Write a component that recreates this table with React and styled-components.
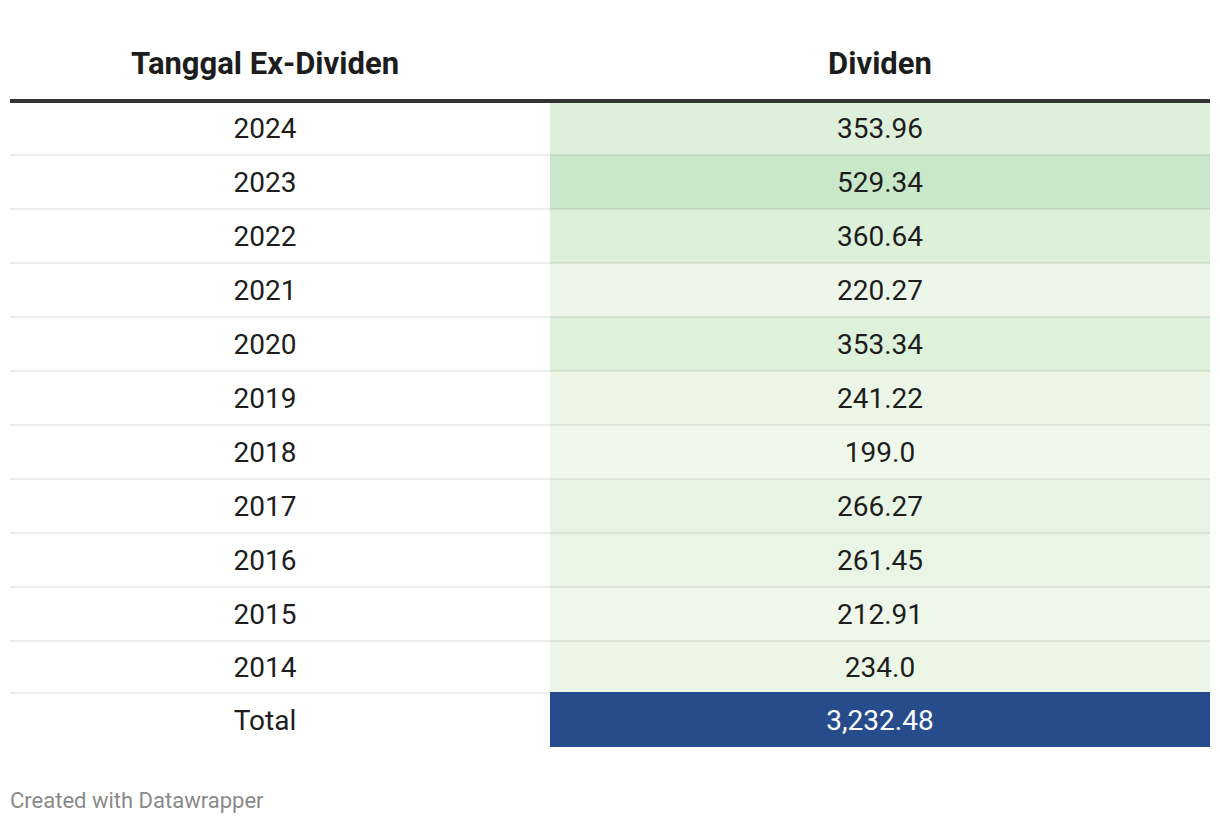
import React from "react";
import styled, { createGlobalStyle } from "styled-components";

const rows = [
  { year: "2024", value: 353.96, label: "353.96" },
  { year: "2023", value: 529.34, label: "529.34" },
  { year: "2022", value: 360.64, label: "360.64" },
  { year: "2021", value: 220.27, label: "220.27" },
  { year: "2020", value: 353.34, label: "353.34" },
  { year: "2019", value: 241.22, label: "241.22" },
  { year: "2018", value: 199.0, label: "199.0" },
  { year: "2017", value: 266.27, label: "266.27" },
  { year: "2016", value: 261.45, label: "261.45" },
  { year: "2015", value: 212.91, label: "212.91" },
  { year: "2014", value: 234.0, label: "234.0" },
];

const MIN = 199;
const MAX = 529.34;
const LOW = [240, 248, 235];
const HIGH = [201, 232, 201];

// heatmap colour for a value, between the lightest and darkest green
const shade = (v) => {
  const t = (v - MIN) / (MAX - MIN);
  const c = LOW.map((l, i) => Math.round(l + (HIGH[i] - l) * t));
  return `rgb(${c.join(",")})`;
};

const GlobalStyle = createGlobalStyle`
  body {
    margin: 0;
    background: #fff;
    font-family: Roboto, "Liberation Sans", sans-serif;
    color: #1d1d1d;
  }
`;

const Page = styled.div`
  padding: 28px 10px 0;
  width: 1200px;
`;

const Table = styled.table`
  width: 1200px;
  border-collapse: collapse;
  table-layout: fixed;
`;

const Col = styled.col`
  width: ${(p) => p.$w}px;
`;

const HeadCell = styled.th`
  box-sizing: border-box;
  height: 73px;
  padding: ${(p) => (p.$first ? "0 30px 0 0" : "0")};
  font-size: 31px;
  font-weight: 700;
  text-align: center;
  vertical-align: middle;
  border-bottom: 4px solid #333;
`;

const Row = styled.tr`
  height: ${(p) => (p.$last ? "52px" : "54px")};
`;

const Cell = styled.td`
  box-sizing: border-box;
  padding: ${(p) => (p.$first ? "0 30px 0 0" : "0")};
  font-size: 28px;
  text-align: center;
  vertical-align: middle;
  border-bottom: ${(p) => (p.$last ? "none" : "2px solid rgba(0, 0, 0, 0.07)")};
`;

const TotalRow = styled.tr`
  height: 54px;
`;

const TotalLabel = styled.td`
  padding: 0 30px 0 0;
  font-size: 28px;
  text-align: center;
  border-top: 2px solid #eee;
`;

const TotalValue = styled.td`
  font-size: 28px;
  text-align: center;
  color: #fff;
  background: #264c8c;
  border-top: 2px solid #264c8c;
`;

const Footer = styled.div`
  margin-top: 41px;
  font-size: 22px;
  color: #8a8a8a;
`;

export default function App() {
  return (
    <>
      <GlobalStyle />
      <Page>
        <Table>
          <colgroup>
            <Col $w={540} />
            <Col $w={660} />
          </colgroup>
          <thead>
            <tr>
              <HeadCell $first>Tanggal Ex-Dividen</HeadCell>
              <HeadCell>Dividen</HeadCell>
            </tr>
          </thead>
          <tbody>
            {rows.map((r, i) => {
              const last = i === rows.length - 1;
              return (
                <Row key={r.year} $last={last}>
                  <Cell $first $last={last}>{r.year}</Cell>
                  <Cell $last={last} style={{ background: shade(r.value) }}>
                    {r.label}
                  </Cell>
                </Row>
              );
            })}
            <TotalRow>
              <TotalLabel>Total</TotalLabel>
              <TotalValue>3,232.48</TotalValue>
            </TotalRow>
          </tbody>
        </Table>
        <Footer>Created with Datawrapper</Footer>
      </Page>
    </>
  );
}
